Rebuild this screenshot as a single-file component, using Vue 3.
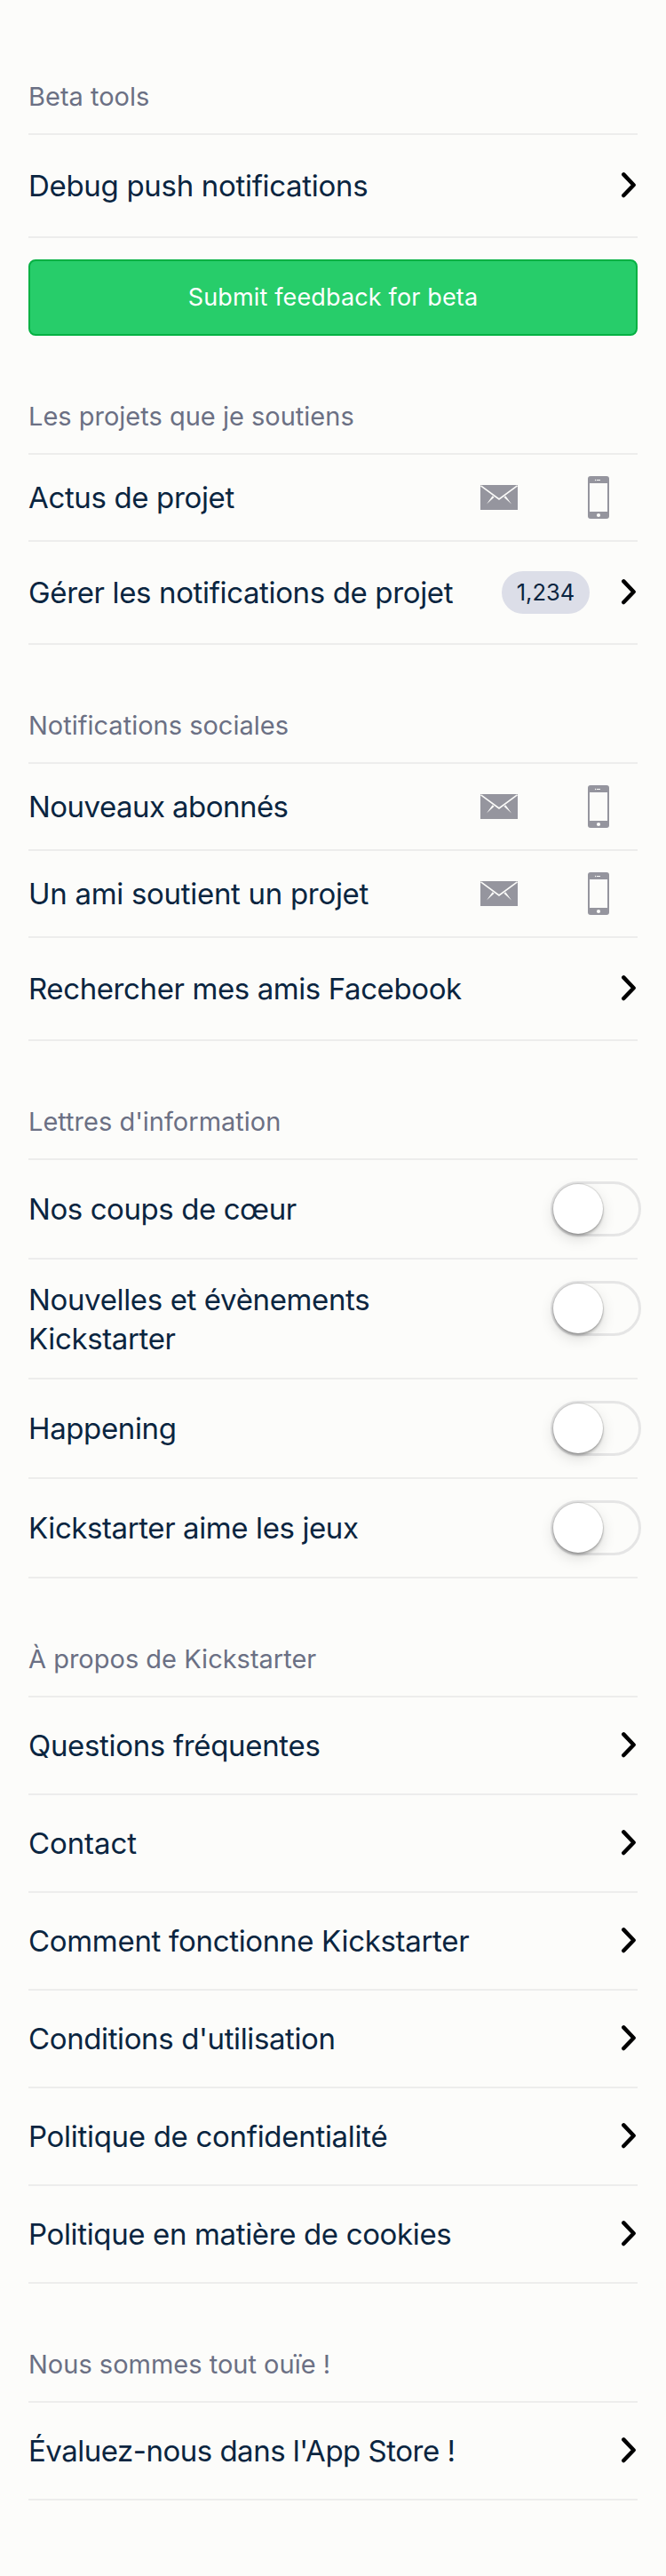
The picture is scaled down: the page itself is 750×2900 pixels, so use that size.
<script setup>
const sections = [
  {
    title: 'Beta tools',
    rows: [{ label: 'Debug push notifications', type: 'link', size: 'tall', tracking: -0.31 }],
    button: 'Submit feedback for beta',
  },
  {
    title: 'Les projets que je soutiens',
    rows: [
      { label: 'Actus de projet', type: 'channels', size: 'short', tracking: -0.36 },
      { label: 'Gérer les notifications de projet', type: 'link', size: 'tall', count: '1,234', tracking: -0.36 },
    ],
  },
  {
    title: 'Notifications sociales',
    rows: [
      { label: 'Nouveaux abonnés', type: 'channels', size: 'short', tracking: -0.54 },
      { label: 'Un ami soutient un projet', type: 'channels', size: 'short', tracking: -0.3 },
      { label: 'Rechercher mes amis Facebook', type: 'link', size: 'tall', tracking: -0.4 },
    ],
  },
  {
    title: "Lettres d'information",
    rows: [
      { label: 'Nos coups de cœur', type: 'toggle', size: 'medium', tracking: -0.42 },
      { label: 'Nouvelles et évènements Kickstarter', type: 'toggle', size: 'double', tracking: -0.36 },
      { label: 'Happening', type: 'toggle', size: 'medium', tracking: -0.38 },
      { label: 'Kickstarter aime les jeux', type: 'toggle', size: 'medium', tracking: -0.4 },
    ],
  },
  {
    title: 'À propos de Kickstarter',
    rows: [
      { label: 'Questions fréquentes', type: 'link', size: 'regular', tracking: -0.33 },
      { label: 'Contact', type: 'link', size: 'regular', tracking: -0.1 },
      { label: 'Comment fonctionne Kickstarter', type: 'link', size: 'regular', tracking: -0.31 },
      { label: "Conditions d'utilisation", type: 'link', size: 'regular', tracking: -0.38 },
      { label: 'Politique de confidentialité', type: 'link', size: 'regular', tracking: -0.3 },
      { label: 'Politique en matière de cookies', type: 'link', size: 'regular', tracking: -0.36 },
    ],
  },
  {
    title: 'Nous sommes tout ouïe !',
    rows: [{ label: "Évaluez-nous dans l'App Store !", type: 'link', size: 'regular', tracking: -0.5 }],
  },
]
</script>

<template>
  <main class="settings">
    <section v-for="section in sections" :key="section.title" class="section">
      <h2 class="title">{{ section.title }}</h2>
      <div v-for="row in section.rows" :key="row.label" class="row" :class="row.size">
        <span class="label" :style="{ letterSpacing: row.tracking + 'px' }">{{ row.label }}</span>

        <span v-if="row.count" class="count">{{ row.count }}</span>

        <svg v-if="row.type === 'link'" class="chevron" width="18" height="30" viewBox="0 0 18 30">
          <path
            d="M3.3 2.4 L14.6 14.2 L3.3 26"
            fill="none"
            stroke="#000"
            stroke-width="4.5"
            stroke-linecap="round"
            stroke-linejoin="round"
          />
        </svg>

        <div v-if="row.type === 'channels'" class="channels">
          <svg width="42" height="28" viewBox="0 0 42 28">
            <rect width="42" height="28" fill="#95959e" />
            <path d="M0.5 0.8 L21 16 L41.5 0.8" fill="none" stroke="#fcfcfa" stroke-width="1.6" />
            <path d="M13.6 12.2 L15.6 13.8 L7 21.4 Z M28.4 12.2 L26.4 13.8 L35 21.4 Z" fill="#fcfcfa" />
          </svg>
          <svg width="24" height="48" viewBox="0 0 24 48">
            <rect width="24" height="48" rx="3" fill="#95959e" />
            <rect x="2" y="8" width="20" height="32" fill="#fcfcfa" />
            <circle cx="8.6" cy="4.5" r="0.7" fill="#fcfcfa" />
            <rect x="10" y="4" width="4" height="1" fill="#fcfcfa" />
            <circle cx="12" cy="44" r="2.1" fill="#fcfcfa" />
          </svg>
        </div>

        <span v-if="row.type === 'toggle'" class="toggle"><i class="knob"></i></span>
      </div>
      <button v-if="section.button" class="feedback">{{ section.button }}</button>
    </section>
  </main>
</template>

<style>
body {
  background: #fcfcfa;
}
</style>

<style scoped>
.settings {
  box-sizing: border-box;
  width: 750px;
  height: 2900px;
  padding: 60px 32px 0;
  background: #fcfcfa;
  font-family: Inter, "Liberation Sans", sans-serif;
  font-weight: 400;
  color: #0a2540;
}
.title {
  display: flex;
  align-items: flex-end;
  box-sizing: border-box;
  height: 134px;
  margin: 0;
  padding-bottom: 23px;
  border-bottom: 2px solid #ededec;
  font-size: 29px;
  line-height: 36px;
  font-weight: 400;
  color: #6b7084;
  white-space: nowrap;
}
.section:first-child .title {
  height: 92px;
}
.row {
  display: flex;
  align-items: center;
  box-sizing: border-box;
  border-bottom: 2px solid #ededec;
}
.short { height: 98px; }
.regular { height: 110px; }
.medium { height: 112px; }
.tall { height: 116px; }
.double { height: 135px; }
.label {
  flex: 1;
  font-size: 33px;
  line-height: 44px;
  white-space: nowrap;
}
.double .label {
  max-width: 420px;
  margin-right: auto;
  white-space: normal;
}
.chevron {
  flex: none;
  margin-right: 1px;
}
.count {
  width: 99px;
  height: 48px;
  margin-right: 35px;
  border-radius: 24px;
  background: #dcdee8;
  font-size: 25.5px;
  line-height: 48px;
  text-align: center;
}
.channels {
  display: flex;
  align-items: center;
  gap: 79px;
  margin-right: 32px;
}
.toggle {
  align-self: flex-start;
  box-sizing: border-box;
  flex: none;
  width: 102px;
  height: 62px;
  margin: 24px -4px 0 0;
  border: 3px solid #e5e5e5;
  border-radius: 31px;
}
.knob {
  display: block;
  width: 56px;
  height: 56px;
  border-radius: 50%;
  background: #fff;
  box-shadow: 0 6px 16px rgba(0, 0, 0, 0.13), 0 3px 3px rgba(0, 0, 0, 0.2), 0 0 1px 1px rgba(0, 0, 0, 0.12);
}
.feedback {
  display: block;
  box-sizing: border-box;
  width: 686px;
  height: 86px;
  margin: 24px 0 0;
  padding: 0;
  border: 2px solid #05b143;
  border-radius: 8px;
  background: #27cd6a;
  color: #fff;
  font-family: inherit;
  font-size: 27px;
  line-height: 82px;
  letter-spacing: 0.15px;
}
</style>
